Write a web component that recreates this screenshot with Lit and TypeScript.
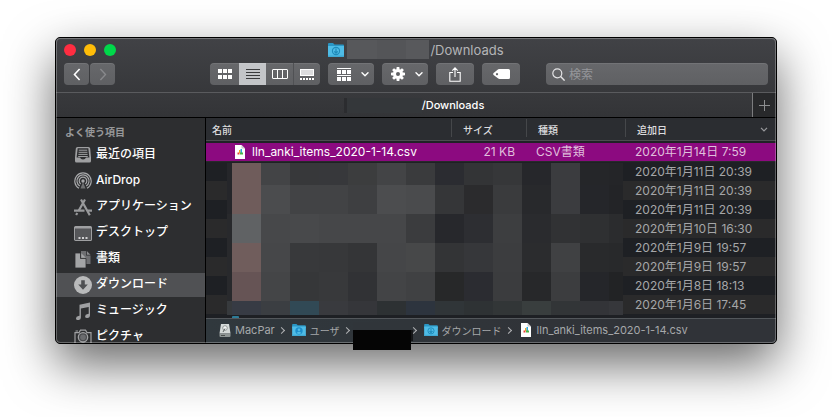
import { LitElement, html, css, svg } from "lit";
import { customElement } from "lit/decorators.js";
import { classMap } from "lit/directives/class-map.js";

const icon = (w: number, h: number, body: unknown) =>
  html`<svg class="icon" width=${w} height=${h} viewBox="0 0 ${w} ${h}" fill="none" aria-hidden="true">${body}</svg>`;

const grid6 = icon(14, 10, svg`<path fill="#fff" d="M0 0h4v4H0zM5 0h4v4H5zM10 0h4v4h-4zM0 6h4v4H0zM5 6h4v4H5zM10 6h4v4h-4z"/>`);
const listIcon = icon(14, 10, svg`<path fill="#3a3b3d" d="M0 0h14v1H0zM0 3h14v1H0zM0 6h14v1H0zM0 9h14v1H0z"/>`);
const columnsIcon = icon(16, 10, svg`<rect x=".5" y=".5" width="15" height="9" rx=".5" stroke="#fff"/><path d="M5.5 0v10M10.5 0v10" stroke="#fff"/>`);
const galleryIcon = icon(14, 11, svg`<rect x=".5" y=".5" width="13" height="6" fill="#dcdcde" stroke="#fff"/><path fill="#fff" d="M0 9h2v2H0zM3 9h2v2H3zM6 9h2v2H6zM9 9h2v2H9zM12 9h2v2h-2z"/>`);
const groupIcon = icon(14, 13, svg`<path fill="#fff" d="M0 0h14v1H0zM0 2h4v4H0zM5 2h4v4H5zM10 2h4v4h-4zM0 7h14v1H0zM0 9h4v4H0zM5 9h4v4H5zM10 9h4v4h-4z"/>`);
const chevronDown = icon(8, 5, svg`<path d="M1 .8 4 3.8 7 .8" stroke="#fff" stroke-width="1.4" stroke-linecap="round" stroke-linejoin="round"/>`);
const sortChevron = icon(8, 5, svg`<path d="M1 .8 4 3.8 7 .8" stroke="#98999c" stroke-width="1.2"/>`);
const gearIcon = icon(
  14,
  14,
  svg`<g fill="#fff">${[0, 45, 90, 135].map(
    (a) => svg`<path transform="rotate(${a} 7 7)" d="M5.7 0h2.6l.4 3v8l-.4 3H5.7l-.4-3V3z"/>`
  )}<circle cx="7" cy="7" r="4.8"/></g><circle cx="7" cy="7" r="2" fill="#606164"/>`
);
const shareIcon = icon(12, 15, svg`<path d="M4 5.5H.8v8.7h10.4V5.5H8M6 10V1M3.3 3.6 6 .9l2.7 2.7" stroke="#fff" stroke-width="1.1"/>`);
const tagIcon = icon(17, 10, svg`<path fill="#fff" fill-rule="evenodd" d="M5.2.3Q5.8 0 6.5 0H15.500a1.500 1.500 0 0 1 1.500 1.500v7a1.500 1.500 0 0 1-1.500 1.500H6.500Q5.800 10 5.200 9.600L.6 6Q-.3 5 .6 4zM4 4a1.100 1.100 0 1 0 .01 0z"/>`);
const backIcon = icon(8, 13, svg`<path d="M6.600 1 1.500 6.500l5.100 5.500" stroke="#fff" stroke-width="1.600"/>`);
const forwardIcon = icon(8, 13, svg`<path d="M1.400 1l5.100 5.500L1.400 12" stroke="#88898c" stroke-width="1.400"/>`);
const searchIcon = icon(13, 13, svg`<circle cx="5.300" cy="5.300" r="4.500" stroke="#e4e4e6" stroke-width="1.200"/><path d="m8.600 8.600 4 4" stroke="#e4e4e6" stroke-width="1.400"/>`);
const plusIcon = icon(11, 11, svg`<path d="M5.500 0v11M0 5.500h11" stroke="#8d8e90"/>`);

const folder = (w: number, h: number, glyph: unknown) => html`<svg class="icon" width=${w} height=${h} viewBox="0 0 16 14" aria-hidden="true">
  <path fill="#2a96c4" d="M0 1Q0 0 1 0h4l1.500 1.500H15q1 0 1 1V5H0z"/>
  <path fill="#4fbce6" d="M0 3h16v10q0 1-1 1H1q-1 0-1-1z"/>
  <path fill="#3fa9d4" d="M0 12.500h16V13q0 1-1 1H1q-1 0-1-1z"/>
  ${glyph}
</svg>`;
const downGlyph = svg`<circle cx="8" cy="8" r="3.600" fill="none" stroke="#1f8bba" stroke-width="1.100"/><path d="M8 5.500v4.500M6.200 8.300 8 10.100l1.800-1.800" fill="none" stroke="#1f8bba" stroke-width="1.200"/>`;
const userGlyph = svg`<circle cx="8" cy="8" r="4.300" fill="#1d8ecb"/><circle cx="8" cy="6.700" r="1.500" fill="#4fbce6"/><path fill="#4fbce6" d="M5.200 10.500q2.800-3.200 5.600 0-2.800 2.400-5.600 0z"/>`;
const fileIcon = icon(
  10,
  14,
  svg`<path fill="#fff" d="M0 0h6.500L10 3.500V14H0z"/><path fill="#c9cacc" d="M6.500 0 10 3.500H6.500z"/><path fill="#e8403a" d="M2.500 7.500h2v2h-2z"/><path fill="#f5a623" d="M4 5h1.500v3H4z"/><path fill="#29a9e0" d="M5.500 4h1.500v4H5.500z"/><path fill="#4bb543" d="M5 7.500h3v2H5z"/>`
);
const diskIcon = icon(
  12,
  13,
  svg`<path fill="#d5dad9" d="M2 0h8l1.500 9.500h-11z"/><path fill="#8f9695" d="M.5 9.500h11V12q0 1-1 1h-9q-1 0-1-1z"/><circle cx="6" cy="4" r="2.300" fill="#f4f6f5" stroke="#7c8382" stroke-width=".8"/><path d="m4 8 2-3.500" stroke="#5f6665"/><path fill="#4a4f4e" d="M2 11h4v1H2z"/>`
);

const sideIcons: Record<string, unknown> = {
  recents: svg`<path fill="#9fa0a2" fill-rule="evenodd" d="M3.500 1h11Q16 1 16.200 2.500L17 11.500v3.500q0 1.500-1.500 1.500h-13Q1 16.500 1 15v-3.500l.8-9Q2 1 3.500 1zM3.700 2.200 2.600 11.500H6q.6 2 3 2t3-2h3.400l-1.100-9.300z"/><path d="M4.800 4.200h8.400M4.600 6.300h8.800M4.400 8.400h9.200M4.200 10.500h9.600" stroke="#9fa0a2"/>`,
  airdrop: svg`<g stroke="#a6a7a9" stroke-width="1.200"><path d="M5 16.200a8.200 8.200 0 1 1 8 0"/><path d="M5.800 14a6 6 0 1 1 6.400 0"/><path d="M6.700 12a3.800 3.800 0 1 1 4.600 0"/></g><circle cx="9" cy="9" r="1.700" fill="#a6a7a9"/><path fill="#a6a7a9" d="m9 10 2.500 6.500h-5z" opacity=".55"/>`,
  apps: svg`<g stroke="#98999b" stroke-width="2.200"><path d="M7 1.500 14.800 15.500l1 1.800M11 1.500 4.800 12.500M3.300 15l-1.200 2"/><path d="M0 12.700h10.500M13.800 12.700H18"/></g>`,
  desktop: svg`<rect x=".6" y="2.600" width="16.800" height="13.800" rx="1" stroke="#9fa0a2" stroke-width="1.200"/><path fill="#56575a" d="M1.200 4h15.600v11.800H1.200z"/><path fill="#9fa0a2" d="M1 2.500h16v2H1z"/><path fill="#d0d0d2" d="M4.500 13h2v2h-2zM8 13h2v2H8zM11.500 13h2v2h-2z"/>`,
  docs: svg`<path fill="#6e6f72" d="M7 1h5v4.500h4.500V14H7z"/><path fill="#8b8c8f" d="M12.800 1 16.500 4.700h-3.700z"/><path fill="#a3a4a6" stroke="#2d2e30" stroke-width=".8" d="M1 3h5.500v5.500H12V18H1z"/><path fill="#a3a4a6" d="M7.300 3.200 11.800 7.700H7.300z"/>`,
  downloads: svg`<circle cx="9" cy="9" r="9" fill="#b9babb"/><path fill="#4f5053" d="M7.200 4.200h3.600v4.300h3L9 13.800 4.200 8.500h3z"/>`,
  music: svg`<path fill="#9fa0a2" d="M5.500 2.800 16 .5v12.800q0 2.400-2.700 2.700-2.200.1-2.200-1.600 0-2 2.600-2.300l1-.3V5L6.900 6.600v8.900q0 2.300-2.700 2.600-2.200.1-2.200-1.600 0-2 2.500-2.400l1-.3z"/>`,
  pictures: svg`<path d="M1 4.600h4L6.500 2.200h5L13 4.600h4V16H1z" stroke="#9fa0a2" stroke-width="1.200"/><path d="M1.500 3h2.500" stroke="#9fa0a2"/><circle cx="9" cy="9.300" r="4.700" stroke="#9fa0a2" stroke-width="1.300" fill="#4b4c4f"/><circle cx="9" cy="9.300" r="2.800" fill="#6b6c6f"/>`,
};

const places = [
  { id: "recents", label: "最近の項目" },
  { id: "airdrop", label: "AirDrop" },
  { id: "apps", label: "アプリケーション" },
  { id: "desktop", label: "デスクトップ" },
  { id: "docs", label: "書類" },
  { id: "downloads", label: "ダウンロード" },
  { id: "music", label: "ミュージック" },
  { id: "pictures", label: "ピクチャ" },
];

const hiddenRowDates = [
  "2020年1月11日 20:39",
  "2020年1月11日 20:39",
  "2020年1月11日 20:39",
  "2020年1月10日 16:30",
  "2020年1月9日 19:57",
  "2020年1月9日 19:57",
  "2020年1月8日 18:13",
  "2020年1月6日 17:45",
];

const mosaic = [
  "25262a 6f5c5b 434446 37383a 37383b 3c3d3e 434446 3a3b3d 2b2c31 333436 363739 26272b 3b3c3f 252629 242528",
  "25262a 6f5c5b 4b4c4e 424345 424345 3e3f41 4c4d4f 4a4b4d 353638 2b2b2d 3a3b3d 28292c 3b3c3f 25262a 232427",
  "28292c 606264 47484a 48494b 464749 464749 464749 3b3c3e 27282c 2d2e32 3d3e40 2a2b2e 313234 2f3032 2b2c2e",
  "28292c 705d5c 464749 38393b 37383a 343537 454648 474849 333436 36373a 3c3d3f 2b2c2e 404143 292a2c 28292b",
  "28292c 665455 444547 363739 38393b 313235 434446 404143 272829 2b2c31 3b3c3e 27282a 3c3d3f 25262a 222325",
  "373a3d 373b44 3b3e42 314955 393a3e 35363a 2d3133 2d343e 303538 2e3234 323637 393e3e 323537 333438 36373b",
].flatMap((row) => row.split(" "));

@customElement("app-root")
export class AppRoot extends LitElement {
  static styles = css`
    :host {
      display: block;
      padding: 37px 55px 73px;
      background: #fff;
      font-family: Inter, "Noto Sans CJK JP", sans-serif;
      font-size: 12px;
      color: #fff;
      overflow: hidden;
    }
    * { box-sizing: border-box; }
    button, input { font: inherit; color: inherit; border: 0; padding: 0; margin: 0; }
    a { color: inherit; text-decoration: none; }
    .icon { display: block; flex: none; }
    .window {
      position: relative;
      border: 1px solid #000;
      border-radius: 5px;
      background: #2d2e30;
      box-shadow: 0 20px 50px rgba(0, 0, 0, 0.6);
    }
    .rim {
      position: absolute;
      inset: 0;
      border: 1px solid rgba(255, 255, 255, 0.28);
      border-radius: 4px;
      pointer-events: none;
    }
    .header {
      background: linear-gradient(#414246, #37383b);
      border-bottom: 1px solid #5a5b5e;
      border-radius: 4px 4px 0 0;
      padding-bottom: 7px;
    }
    .titlebar {
      display: grid;
      grid-template-columns: 1fr auto 1fr;
      align-items: center;
      height: 25px;
      padding: 0 8px 2px;
    }
    .lights { display: flex; gap: 8px; }
    .light { width: 12px; height: 12px; border-radius: 50%; }
    .close { background: #ff2d41; }
    .minimize { background: #ffbd08; }
    .zoom { background: #00d84a; }
    .title {
      display: flex;
      align-items: center;
      font-size: 13px;
      color: #b4b5b7;
    }
    .title-mask {
      width: 82px;
      height: 19px;
      margin: 0 1px 0 3px;
      background: linear-gradient(90deg, #57585b 0 37%, #545558 37% 72%, #58595c 72%);
    }
    .toolbar { display: flex; gap: 8px; padding: 0 8px; }
    .tool {
      display: flex;
      align-items: center;
      justify-content: center;
      height: 22px;
      background: linear-gradient(#67686b, #5f6063);
      border-radius: 4px;
      box-shadow: inset 0 1px 0 rgba(255, 255, 255, 0.08);
    }
    .history { display: flex; gap: 1px; margin-right: 87px; }
    .history .tool { width: 25px; }
    .views { display: flex; }
    .views .tool { width: 27px; border-radius: 0; }
    .views .tool:first-child { width: 29px; border-radius: 4px 0 0 4px; }
    .views .tool:last-child { border-radius: 0 4px 4px 0; border-left: 1px solid #505154; }
    .views .tool.on { background: #c3c5c8; }
    .menu { width: 46px; gap: 10px; padding-left: 4px; }
    .single { width: 38px; }
    .search {
      flex: 1;
      min-width: 0;
      justify-content: flex-start;
      gap: 4px;
      margin-left: 18px;
      padding: 0 6px;
    }
    .search input { flex: 1; min-width: 0; background: none; outline: 0; }
    .search input::placeholder { color: #95969a; opacity: 1; }
    .tabs {
      display: flex;
      height: 25px;
      background: linear-gradient(#38393c, #333437);
      border-bottom: 1px solid #000;
    }
    .tab {
      flex: 1;
      display: flex;
      align-items: center;
      justify-content: center;
      padding-left: 20px;
      font-size: 11px;
      font-weight: 500;
    }
    .tab-mask {
      width: 78px;
      height: 15px;
      background: #34373a;
      border-left: 3px solid #2b2c2f;
    }
    .add {
      display: grid;
      place-items: center;
      width: 24px;
      background: #28292b;
      border-left: 1px solid #7b7c7e;
    }
    .body { display: flex; }
    .sidebar {
      width: 150px;
      flex: none;
      contain: size;
      overflow: hidden;
      padding-top: 7px;
      background: #2d2e30;
      border-right: 1px solid #000;
      border-radius: 0 0 0 4px;
    }
    .sidebar h2 {
      margin: 0 0 4px;
      padding-left: 9px;
      font-size: 10px;
      line-height: 14px;
      font-weight: 700;
      color: #97989a;
    }
    .places { display: grid; gap: 2px; }
    .place {
      display: flex;
      align-items: center;
      gap: 4px;
      height: 24px;
      padding-left: 18px;
      font-weight: 500;
      line-height: 14px;
      white-space: nowrap;
    }
    .place span { padding-bottom: 2px; }
    .place.on { background: #505154; }
    .main { flex: 1; min-width: 0; }
    .files { position: relative; padding-bottom: 4px; background: #1e2024; }
    table { width: 100%; table-layout: fixed; border-collapse: separate; border-spacing: 0; }
    th {
      padding: 1px 0 3px;
      background: #2b2d31;
      border-bottom: 1px solid #4c4d50;
      font-size: 10px;
      font-weight: 500;
      text-align: left;
      color: #dcdcde;
    }
    .head {
      display: flex;
      align-items: center;
      justify-content: space-between;
      height: 18px;
      padding: 2px 8px 0 11px;
      border-left: 1px solid #45474a;
    }
    th:first-child .head { border: 0; padding-left: 6px; }
    .col-size { width: 75px; }
    .col-kind { width: 99px; }
    .col-date { width: 151px; }
    td {
      height: 19px;
      padding: 0 0 0 10px;
      line-height: 18px;
      white-space: nowrap;
      color: #a5a6a8;
    }
    tbody tr:nth-child(odd) td { background: #2a2a2b; }
    tbody tr.selected td {
      height: 21px;
      background: #8c0a80;
      border-top: 2px solid #202226;
      border-bottom: 1px solid #28292b;
      color: #e0bfdd;
    }
    tr.selected td.name { color: #fff; padding-left: 29px; }
    td.size { padding: 0 11px 0 0; text-align: right; }
    .file { display: flex; align-items: center; gap: 7px; }
    .mosaic {
      position: absolute;
      left: 21px;
      right: 153px;
      top: 45px;
      bottom: 3px;
      display: grid;
      grid-template-columns: 5fr repeat(13, 29fr) 14fr;
      grid-template-rows: 22fr repeat(4, 29fr) 14fr;
    }
    .peek {
      position: absolute;
      left: 26px;
      bottom: 0;
      width: 7px;
      height: 2px;
      background: #2d7c98;
      border-radius: 1px 1px 0 0;
    }
    .path {
      display: flex;
      align-items: center;
      height: 25px;
      margin: 0;
      padding: 0 0 2px 13px;
      list-style: none;
      font-size: 11px;
      color: #a6a8aa;
      background: linear-gradient(90deg, #30383d, #303338 60%);
      border-top: 1px solid #53575b;
      border-radius: 0 0 4px 0;
      white-space: nowrap;
    }
    .path li { display: flex; align-items: center; }
    .path li + li::before {
      content: "";
      width: 4px;
      height: 4px;
      margin: 0 8px 0 4px;
      border: solid #b0b2b4;
      border-width: 1px 1px 0 0;
      rotate: 45deg;
    }
    .path a { display: flex; align-items: center; gap: 4px; }
    .path .kana { font-size: 10px; }
    .path .current { gap: 6px; margin-left: 2px; }
    .path .hidden-step { position: relative; width: 67px; height: 22px; }
    .redaction {
      position: absolute;
      left: 13px;
      top: 11px;
      z-index: 1;
      width: 58px;
      height: 20px;
      background: #050505;
    }
    .smudge {
      position: absolute;
      left: 13px;
      top: 3px;
      width: 60px;
      height: 19px;
      background: linear-gradient(#30353a 0 8px, #141517 8px);
    }
  `;

  render() {
    return html`
      <main class="window">
        <header class="header">
          <div class="titlebar">
            <div class="lights">
              <button class="light close" aria-label="閉じる"></button>
              <button class="light minimize" aria-label="しまう"></button>
              <button class="light zoom" aria-label="拡大"></button>
            </div>
            <div class="title">${folder(16, 14, downGlyph)}<span class="title-mask"></span>/Downloads</div>
          </div>
          <div class="toolbar">
            <div class="history">
              <button class="tool" aria-label="戻る">${backIcon}</button>
              <button class="tool" aria-label="進む">${forwardIcon}</button>
            </div>
            <div class="views">
              <button class="tool" aria-label="アイコン">${grid6}</button>
              <button class="tool on" aria-label="リスト" aria-pressed="true">${listIcon}</button>
              <button class="tool" aria-label="カラム">${columnsIcon}</button>
              <button class="tool" aria-label="ギャラリー">${galleryIcon}</button>
            </div>
            <button class="tool menu" aria-label="グループ">${groupIcon}${chevronDown}</button>
            <button class="tool menu" aria-label="アクション">${gearIcon}${chevronDown}</button>
            <button class="tool single" aria-label="共有">${shareIcon}</button>
            <button class="tool single" aria-label="タグ">${tagIcon}</button>
            <label class="tool search">${searchIcon}<input type="search" placeholder="検索" aria-label="検索" /></label>
          </div>
        </header>
        <div class="tabs">
          <div class="tab"><span class="tab-mask"></span>/Downloads</div>
          <button class="add" aria-label="新規タブ">${plusIcon}</button>
        </div>
        <div class="body">
          <nav class="sidebar">
            <h2>よく使う項目</h2>
            <div class="places">
              ${places.map(
                (p) => html`<a href="#${p.id}" class=${classMap({ place: true, on: p.id === "downloads" })}>
                  ${icon(18, 18, sideIcons[p.id])}<span>${p.label}</span></a>`
              )}
            </div>
          </nav>
          <section class="main">
            <div class="files">
              <table>
                <thead>
                  <tr>
                    <th><div class="head">名前</div></th>
                    <th class="col-size"><div class="head">サイズ</div></th>
                    <th class="col-kind"><div class="head">種類</div></th>
                    <th class="col-date" aria-sort="descending"><div class="head">追加日${sortChevron}</div></th>
                  </tr>
                </thead>
                <tbody>
                  <tr class="selected">
                    <td class="name"><div class="file">${fileIcon}lln_anki_items_2020-1-14.csv</div></td>
                    <td class="size">21 KB</td>
                    <td>CSV書類</td>
                    <td>2020年1月14日 7:59</td>
                  </tr>
                  ${hiddenRowDates.map((d) => html`<tr><td></td><td></td><td></td><td>${d}</td></tr>`)}
                </tbody>
              </table>
              <div class="mosaic">${mosaic.map((c) => html`<i style="background:#${c}"></i>`)}</div>
              <span class="peek"></span>
            </div>
            <ol class="path">
              <li><a href="#disk">${diskIcon}MacPar</a></li>
              <li><a href="#users" class="kana">${folder(14, 12, userGlyph)}ユーザ</a></li>
              <li class="hidden-step"><span class="smudge"></span><span class="redaction"></span></li>
              <li><a href="#downloads" class="kana">${folder(14, 12, downGlyph)}ダウンロード</a></li>
              <li><a href="#file" class="current">${fileIcon}lln_anki_items_2020-1-14.csv</a></li>
            </ol>
          </section>
        </div>
        <div class="rim"></div>
      </main>
    `;
  }
}
